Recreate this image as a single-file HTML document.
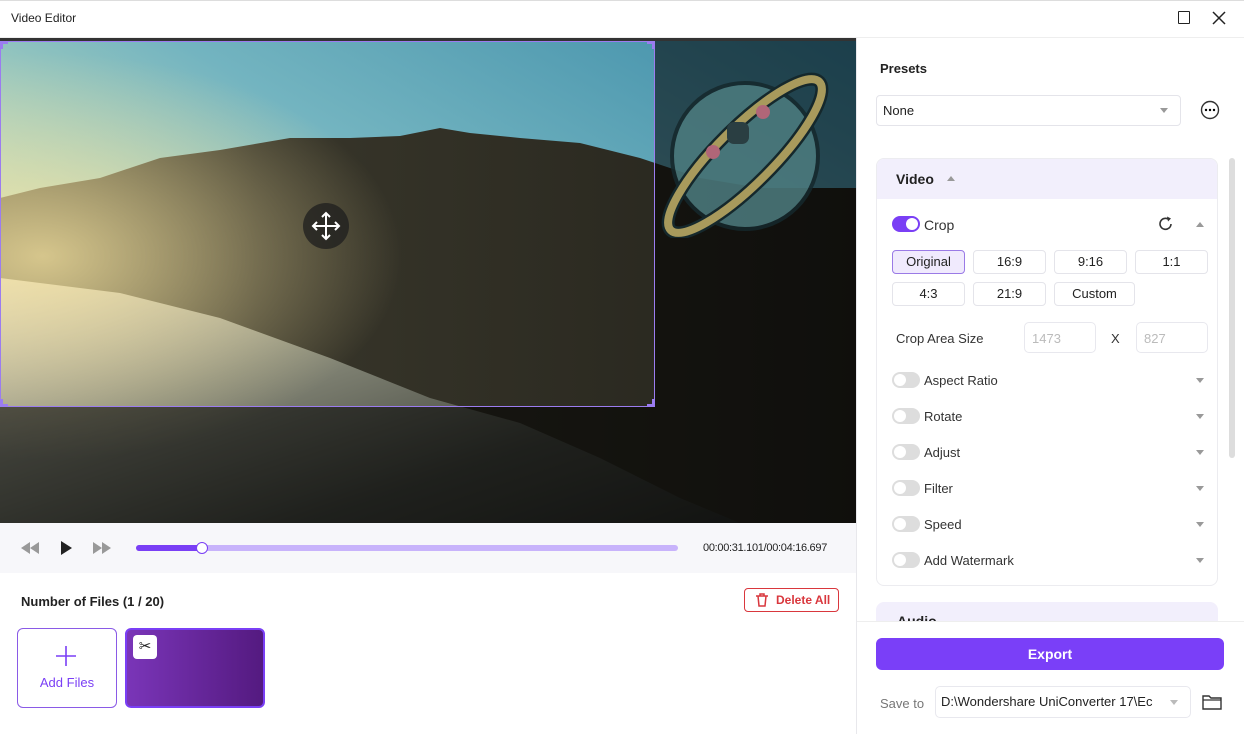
<!DOCTYPE html>
<html><head><meta charset="utf-8"><style>
*{box-sizing:border-box;margin:0;padding:0}
body{width:1244px;height:734px;overflow:hidden;background:#fff;font-family:"Liberation Sans",sans-serif;color:#222;position:relative}
.abs{position:absolute}
.btn{position:absolute;height:24px;border:1px solid #e4e4ea;border-radius:4px;font-size:13px;text-align:center;line-height:22px;color:#222;background:#fff}
.row{position:absolute;left:892px;font-size:13px;color:#333}
.tg{position:absolute;left:892px;width:28px;height:16px;border-radius:8px;background:#ddd}
.tg:after{content:"";position:absolute;left:2px;top:2px;width:12px;height:12px;border-radius:50%;background:#fff}
.tg.on{background:#7a3ff5}
.tg.on:after{left:14px}
.ar{position:absolute;left:1196px;width:0;height:0;border-left:4px solid transparent;border-right:4px solid transparent;border-top:5px solid #999}
</style></head><body>
<div class="abs" style="left:0;top:0;width:1244px;height:38px;border-bottom:1px solid #eee;border-top:1px solid #ddd"></div>
<div class="abs" style="left:11px;top:11px;font-size:12px">Video Editor</div>
<div class="abs" style="left:1178px;top:11px;width:12px;height:13px;border:1.5px solid #222;border-radius:1px"></div>
<svg class="abs" style="left:1212px;top:11px" width="14" height="14"><path d="M1 1L13 13M13 1L1 13" stroke="#222" stroke-width="1.5"/></svg>

<!-- video -->
<div class="abs" style="left:0;top:38px;width:856px;height:485px;background:#111;overflow:hidden">
<svg width="856" height="485" style="position:absolute;left:0;top:0">
<defs>
<linearGradient id="sky" x1="0" y1="1" x2="1" y2="0"><stop offset="0" stop-color="#f2e3a0"/><stop offset="0.35" stop-color="#b9d8bd"/><stop offset="0.6" stop-color="#73b4c0"/><stop offset="1" stop-color="#3d8ca8"/></linearGradient>
<linearGradient id="mt" x1="0" y1="0" x2="1" y2="0"><stop offset="0" stop-color="#5e5a40"/><stop offset="0.3" stop-color="#38362a"/><stop offset="1" stop-color="#24231c"/></linearGradient>
<linearGradient id="sea" x1="0" y1="0" x2="1" y2="1"><stop offset="0" stop-color="#dcd8c4"/><stop offset="0.35" stop-color="#8a8c7c"/><stop offset="0.7" stop-color="#454840"/><stop offset="1" stop-color="#2a2c28"/></linearGradient>
<radialGradient id="glow" cx="0.05" cy="0.45" r="0.42"><stop offset="0" stop-color="#f5e2a0" stop-opacity="0.8"/><stop offset="1" stop-color="#f5e2a0" stop-opacity="0"/></radialGradient>
</defs>
<rect width="856" height="485" fill="url(#sky)"/>
<path d="M0 160 L40 150 L100 140 L160 120 L220 112 L290 100 L350 100 L400 98 L440 90 L470 95 L520 100 L580 105 L640 120 L700 140 L760 150 L856 150 L856 485 L0 485Z" fill="url(#mt)"/>
<path d="M0 240 L120 255 L220 280 L330 320 L430 360 L520 385 L600 420 L680 460 L740 485 L0 485Z" fill="url(#sea)"/>
<rect width="856" height="485" fill="url(#glow)"/>
<rect width="856" height="3" fill="#333"/>
</svg>
<div class="abs" style="left:655px;top:3px;width:201px;height:482px;background:rgba(0,0,0,.55)"></div>
<div class="abs" style="left:0;top:369px;width:655px;height:116px;background:rgba(0,0,0,.55)"></div>
<svg class="abs" style="left:655px;top:0" width="200" height="200">
<circle cx="90" cy="118" r="73" fill="#4d7d80" stroke="#15282c" stroke-width="4" opacity=".85"/>
<ellipse cx="90" cy="118" rx="105" ry="28" transform="rotate(-45 90 118)" fill="none" stroke="#15282c" stroke-width="13"/>
<ellipse cx="90" cy="118" rx="105" ry="28" transform="rotate(-45 90 118)" fill="none" stroke="#a89a5c" stroke-width="8"/>
<rect x="72" y="84" width="22" height="22" rx="7" fill="#2a3e42"/>
<circle cx="108" cy="74" r="7" fill="#b06678"/><circle cx="58" cy="114" r="7" fill="#b06678"/>
</svg>
<div class="abs" style="left:0;top:3px;width:655px;height:366px;border:1.5px solid #9b7cf0"></div>
<div class="abs" style="left:0;top:3px;width:8px;height:8px;border-left:3px solid #9b7cf0;border-top:3px solid #9b7cf0"></div>
<div class="abs" style="left:647px;top:3px;width:8px;height:8px;border-right:3px solid #9b7cf0;border-top:3px solid #9b7cf0"></div>
<div class="abs" style="left:0;top:361px;width:8px;height:8px;border-left:3px solid #9b7cf0;border-bottom:3px solid #9b7cf0"></div>
<div class="abs" style="left:647px;top:361px;width:8px;height:8px;border-right:3px solid #9b7cf0;border-bottom:3px solid #9b7cf0"></div>
<div class="abs" style="left:303px;top:165px;width:46px;height:46px;border-radius:50%;background:rgba(30,30,30,.75)"></div>
<svg class="abs" style="left:310px;top:172px" width="32" height="32"><path d="M16 3V29M3 16H29M12 7L16 3L20 7M12 25L16 29L20 25M7 12L3 16L7 20M25 12L29 16L25 20" stroke="#fff" stroke-width="2" fill="none"/></svg>
</div>

<!-- controls -->
<div class="abs" style="left:0;top:523px;width:856px;height:50px;background:#f7f7fa"></div>
<svg class="abs" style="left:20px;top:541px" width="100" height="14">
<path d="M10 1L1 7L10 13ZM19 1L10 7L19 13Z" fill="#999"/><path d="M41 0L52 7L41 14Z" fill="#222"/><path d="M73 1L82 7L73 13ZM82 1L91 7L82 13Z" fill="#999"/></svg>
<div class="abs" style="left:136px;top:545px;width:542px;height:6px;border-radius:3px;background:#c8b3fb"></div>
<div class="abs" style="left:136px;top:545px;width:66px;height:6px;border-radius:3px;background:#7a3ff5"></div>
<div class="abs" style="left:196px;top:542px;width:12px;height:12px;border-radius:50%;background:#fff;border:1.5px solid #7a3ff5"></div>
<div class="abs" style="left:703px;top:542px;font-size:11px;letter-spacing:-.3px">00:00:31.101/00:04:16.697</div>

<div class="abs" style="left:21px;top:594px;font-size:13px;font-weight:bold">Number of Files (1 / 20)</div>
<div class="abs" style="left:744px;top:588px;width:95px;height:24px;border:1px solid #d9373d;border-radius:4px;color:#d9373d;font-size:12px;font-weight:bold;line-height:22px;padding-left:31px">Delete All</div>
<svg class="abs" style="left:755px;top:593px" width="14" height="14"><path d="M1 3H13M5 3V1H9V3M3 3L4 13H10L11 3" stroke="#d9373d" stroke-width="1.5" fill="none"/></svg>
<div class="abs" style="left:17px;top:628px;width:100px;height:80px;border:1px solid #8a5ae6;border-radius:6px"></div>
<svg class="abs" style="left:56px;top:646px" width="20" height="20"><path d="M10 0V20M0 10H20" stroke="#7a3ff5" stroke-width="1.6"/></svg>
<div class="abs" style="left:17px;top:675px;width:100px;text-align:center;font-size:13px;color:#7a3ff5">Add Files</div>
<div class="abs" style="left:125px;top:628px;width:140px;height:80px;border:2px solid #7a3ff5;border-radius:6px;background:linear-gradient(90deg,#7a35b8,#541a80)"></div>
<div class="abs" style="left:133px;top:635px;width:24px;height:24px;border-radius:4px;background:#fff;font-size:15px;text-align:center;line-height:24px">✂</div>

<!-- right panel -->
<div class="abs" style="left:856px;top:38px;width:1px;height:696px;background:#e8e8ec"></div>
<div class="abs" style="left:880px;top:61px;font-size:13px;font-weight:bold">Presets</div>
<div class="abs" style="left:876px;top:95px;width:305px;height:31px;border:1px solid #e4e4ea;border-radius:4px;font-size:13px;line-height:29px;padding-left:6px">None</div>
<div class="abs" style="left:1160px;top:108px;border-left:4px solid transparent;border-right:4px solid transparent;border-top:5px solid #999"></div>
<svg class="abs" style="left:1200px;top:100px" width="20" height="20"><circle cx="10" cy="10" r="8.5" fill="none" stroke="#333" stroke-width="1.4"/><circle cx="6" cy="10" r="1.2"/><circle cx="10" cy="10" r="1.2"/><circle cx="14" cy="10" r="1.2"/></svg>

<div class="abs" style="left:876px;top:158px;width:342px;height:428px;border:1px solid #ececf0;border-radius:8px;overflow:hidden">
<div style="height:40px;background:#f2effc"></div></div>
<div class="abs" style="left:896px;top:171px;font-size:14px;font-weight:bold">Video</div>
<div class="abs" style="left:947px;top:176px;border-left:4px solid transparent;border-right:4px solid transparent;border-bottom:5px solid #999"></div>
<div class="abs" style="left:1229px;top:158px;width:6px;height:300px;border-radius:3px;background:#ddd"></div>

<div class="tg on" style="top:216px"></div>
<div class="row" style="left:924px;top:217px;font-size:14px">Crop</div>
<svg class="abs" style="left:1158px;top:216px" width="16" height="16"><path d="M13 8A5.5 5.5 0 1 1 10.5 3.2" fill="none" stroke="#333" stroke-width="1.6"/><path d="M9 0.5L13 2.5L10 5.5Z" fill="#333"/></svg>
<div class="abs" style="left:1196px;top:222px;border-left:4px solid transparent;border-right:4px solid transparent;border-bottom:5px solid #999"></div>

<div class="btn" style="left:892px;top:250px;width:73px;background:#f0eafd;border-color:#9a7ae6">Original</div>
<div class="btn" style="left:973px;top:250px;width:73px">16:9</div>
<div class="btn" style="left:1054px;top:250px;width:73px">9:16</div>
<div class="btn" style="left:1135px;top:250px;width:73px">1:1</div>
<div class="btn" style="left:892px;top:282px;width:73px">4:3</div>
<div class="btn" style="left:973px;top:282px;width:73px">21:9</div>
<div class="btn" style="left:1054px;top:282px;width:81px">Custom</div>
<div class="row" style="left:896px;top:331px">Crop Area Size</div>
<div class="abs" style="left:1024px;top:322px;width:72px;height:31px;border:1px solid #e8e8ee;border-radius:5px;font-size:13px;color:#bbb;padding:8px 7px">1473</div>
<div class="row" style="left:1111px;top:331px">X</div>
<div class="abs" style="left:1136px;top:322px;width:72px;height:31px;border:1px solid #e8e8ee;border-radius:5px;font-size:13px;color:#bbb;padding:8px 7px">827</div>

<div class="tg" style="top:372px"></div><div class="row" style="left:924px;top:373px">Aspect Ratio</div><div class="ar" style="top:378px"></div>
<div class="tg" style="top:408px"></div><div class="row" style="left:924px;top:409px">Rotate</div><div class="ar" style="top:414px"></div>
<div class="tg" style="top:444px"></div><div class="row" style="left:924px;top:445px">Adjust</div><div class="ar" style="top:450px"></div>
<div class="tg" style="top:480px"></div><div class="row" style="left:924px;top:481px">Filter</div><div class="ar" style="top:486px"></div>
<div class="tg" style="top:516px"></div><div class="row" style="left:924px;top:517px">Speed</div><div class="ar" style="top:522px"></div>
<div class="tg" style="top:552px"></div><div class="row" style="left:924px;top:553px">Add Watermark</div><div class="ar" style="top:558px"></div>

<div class="abs" style="left:876px;top:602px;width:342px;height:20px;background:#f2effc;border-radius:8px 8px 0 0"></div>
<div class="abs" style="left:897px;top:613px;font-size:14px;font-weight:bold;height:8px;overflow:hidden;line-height:16px">Audio</div>
<div class="abs" style="left:857px;top:621px;width:387px;height:113px;background:#fff;border-top:1px solid #eee"></div>
<div class="abs" style="left:876px;top:638px;width:348px;height:32px;border-radius:6px;background:#7a3ff8;color:#fff;font-size:14px;font-weight:bold;text-align:center;line-height:32px">Export</div>
<div class="abs" style="left:880px;top:696px;font-size:13px;color:#777">Save to</div>
<div class="abs" style="left:935px;top:686px;width:256px;height:32px;border:1px solid #e8e8ee;border-radius:5px;font-size:13px;line-height:30px;padding-left:5px;overflow:hidden;white-space:nowrap;padding-right:26px">D:\Wondershare UniConverter 17\Ec</div>
<div class="abs" style="left:1170px;top:700px;border-left:4px solid transparent;border-right:4px solid transparent;border-top:5px solid #bbb"></div>
<svg class="abs" style="left:1202px;top:694px" width="20" height="16"><path d="M1 2H7L9 4H19V15H1Z" fill="none" stroke="#333" stroke-width="1.4"/><path d="M1 6H19" stroke="#333" stroke-width="1.2"/></svg>
</body></html>
